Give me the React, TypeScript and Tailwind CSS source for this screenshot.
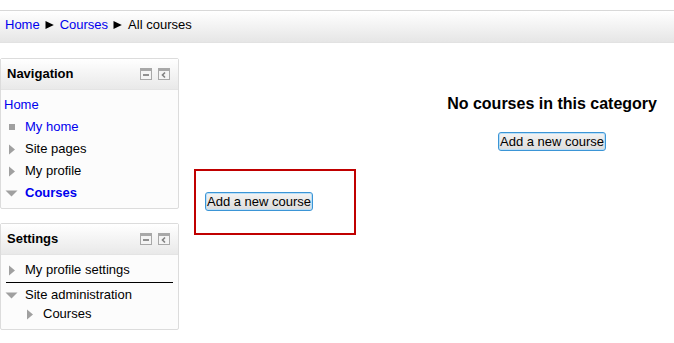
import React from "react";

const RightTri = () => (
  <svg width="8" height="11" viewBox="0 0 8 11" className="block">
    <path d="M1 0.5 L7 5.5 L1 10.5 Z" fill="#a0a0a0" />
  </svg>
);
const DownTri = () => (
  <svg width="13" height="7" viewBox="0 0 13 7" className="block">
    <path d="M0.5 0.5 L12.5 0.5 L6.5 6.5 Z" fill="#a0a0a0" />
  </svg>
);
const Square = () => <div className="w-[6px] h-[6px] bg-[#a0a0a0]" />;

const Crumb = () => (
  <svg width="9" height="10" viewBox="0 0 9 10" className="block ml-[5px] mr-[6px]">
    <path d="M0.5 1 L8.8 5 L0.5 9 Z" fill="#000" />
  </svg>
);

const MinIcon = () => (
  <svg width="12" height="12" viewBox="0 0 12 12" className="block">
    <rect x="0.5" y="0.5" width="11" height="11" fill="#f4f4f4" stroke="#a8a8a8" />
    <rect x="1" y="1" width="10" height="2" fill="#a8a8a8" />
    <rect x="3" y="6" width="6" height="2" fill="#909090" />
  </svg>
);
const DockIcon = () => (
  <svg width="12" height="12" viewBox="0 0 12 12" className="block">
    <rect x="0.5" y="0.5" width="11" height="11" fill="#f4f4f4" stroke="#a8a8a8" />
    <rect x="1" y="1" width="10" height="2" fill="#a8a8a8" />
    <path d="M7 4.5 L4.5 7 L7 9.5" fill="none" stroke="#808080" strokeWidth="1.6" />
  </svg>
);

const BlockHeader = ({ title }: { title: string }) => (
  <div className="h-[31px] flex items-center justify-between pl-[6px] pr-[8px] pb-[1px] bg-gradient-to-b from-white to-[#e9e9e9] border-b border-[#e4e4e4]">
    <span className="font-bold text-[13px]">{title}</span>
    <div className="flex gap-[6px] mt-[1px]">
      <MinIcon />
      <DockIcon />
    </div>
  </div>
);

const Row = ({
  icon,
  text,
  link,
  bold,
  h = 22,
}: {
  icon: React.ReactNode;
  text: string;
  link?: boolean;
  bold?: boolean;
  h?: number;
}) => (
  <div className="flex items-center" style={{ height: h }}>
    <div className="w-[24px] flex justify-center pr-[3px] shrink-0">{icon}</div>
    <span className={(link ? "text-[#0000ee] " : "") + (bold ? "font-bold" : "")}>{text}</span>
  </div>
);

const Btn = () => (
  <button className="h-[19px] px-[1px] leading-[15px] text-[13px] text-black rounded-[3px] border border-[#3b95d6] shadow-[inset_0_0_0_1px_#b9def7] bg-gradient-to-b from-[#f3f3f3] to-[#dcdcdc] font-['Liberation_Sans',Arial,sans-serif]">
    Add a new course
  </button>
);

export default function App() {
  return (
    <div className="w-[674px] h-[343px] bg-white overflow-hidden text-[13px] text-black font-['Liberation_Sans',Arial,sans-serif]">
      <div className="h-[10px]" />
      <div className="h-[33px] border-t border-b border-t-[#d8d8d8] border-b-[#e2e2e2] bg-gradient-to-b from-white to-[#e6e6e6] flex items-start pt-[6px] pl-[5px] leading-[15px]">
        <a className="text-[#0000ee]">Home</a>
        <div className="h-[15px] flex items-center"><Crumb /></div>
        <a className="text-[#0000ee]">Courses</a>
        <div className="h-[15px] flex items-center"><Crumb /></div>
        <span>All courses</span>
      </div>
      <div className="flex mt-[15px]">
        <div className="w-[179px] shrink-0 flex flex-col gap-[14px]">
          <div className="border border-[#dcdcdc] rounded-[2px] bg-[#fcfcfc]">
            <BlockHeader title="Navigation" />
            <div className="pt-[4px] pb-[4px]">
              <div className="h-[22px] flex items-center pl-[3px]">
                <span className="text-[#0000ee]">Home</span>
              </div>
              <Row icon={<Square />} text="My home" link />
              <Row icon={<RightTri />} text="Site pages" />
              <Row icon={<RightTri />} text="My profile" />
              <Row icon={<DownTri />} text="Courses" link bold />
            </div>
          </div>
          <div className="border border-[#dcdcdc] rounded-[2px] bg-[#fcfcfc]">
            <BlockHeader title="Settings" />
            <div className="pt-[4px] pb-[7px]">
              <Row icon={<RightTri />} text="My profile settings" />
              <div className="mx-[5px] mt-[1px] h-px bg-black" />
              <div className="mt-[1px]">
                <Row icon={<DownTri />} text="Site administration" />
              </div>
              <div className="pl-[18px]">
                <Row icon={<RightTri />} text="Courses" h={16} />
              </div>
            </div>
          </div>
        </div>
        <div className="flex-1 ml-[15px] flex flex-col">
          <div className="flex justify-end pr-[17px] mt-[37px]">
            <div className="flex flex-col items-center">
              <h2 className="font-bold text-[16px] leading-[18px]">No courses in this category</h2>
              <div className="mt-[19px] h-[19px]">
                <Btn />
              </div>
            </div>
          </div>
          <div className="mt-[18px] w-[162px] h-[66px] border-2 border-[#c00000] pl-[9px] pt-[21px]">
            <Btn />
          </div>
        </div>
      </div>
    </div>
  );
}
